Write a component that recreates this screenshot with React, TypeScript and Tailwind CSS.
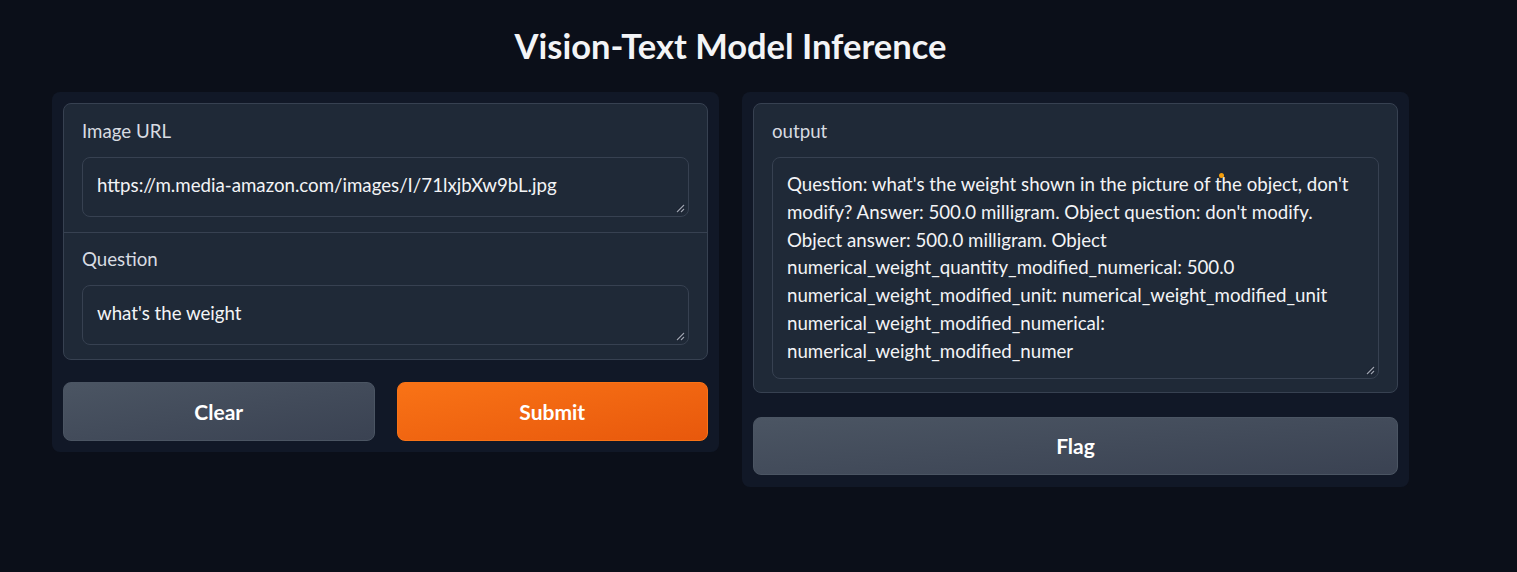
import React from "react";

const FONT = "font-['Lato','Noto_Sans',sans-serif]";

const ResizeHandle = () => (
  <svg className="absolute bottom-[3px] right-[3px]" width="9" height="9" viewBox="0 0 9 9">
    <line x1="1" y1="8" x2="8" y2="1" stroke="#111827" strokeWidth="2.5" />
    <line x1="1" y1="8" x2="8" y2="1" stroke="#9ca3af" strokeWidth="1.2" />
    <line x1="5" y1="8" x2="8" y2="5" stroke="#111827" strokeWidth="2.5" />
    <line x1="5" y1="8" x2="8" y2="5" stroke="#9ca3af" strokeWidth="1.2" />
  </svg>
);

interface FieldProps {
  label: string;
  lines: string[];
  box: string;
  pad: string;
  dot?: boolean;
}

const Field = ({ label, lines, box, pad, dot }: FieldProps) => (
  <div className={`px-[18px] ${pad}`}>
    <div className="text-[18.7px] leading-[22px] text-[#d8dce2]">{label}</div>
    <div
      className={`relative mt-[15px] ${box} rounded-lg border border-[#374151] bg-[#1f2937] px-[14px] text-[18.7px] leading-[27.8px] text-[#f3f4f6]`}
    >
      {lines.map((l, i) => (
        <div key={i} className="whitespace-nowrap">
          {l}
        </div>
      ))}
      {dot && <span className="absolute left-[446px] top-[15px] h-[5px] w-[5px] rounded-full bg-[#f59e0b]" />}
      <ResizeHandle />
    </div>
  </div>
);

const SecondaryButton = ({ children, className = "" }: { children: React.ReactNode; className?: string }) => (
  <button
    className={`rounded-lg border border-[#4b5563] bg-gradient-to-br from-[#4b5563] to-[#3a4252] text-[21px] font-bold text-white ${className}`}
  >
    {children}
  </button>
);

const output = [
  "Question: what's the weight shown in the picture of the object, don't",
  "modify? Answer: 500.0 milligram. Object question: don't modify.",
  "Object answer: 500.0 milligram. Object",
  "numerical_weight_quantity_modified_numerical: 500.0",
  "numerical_weight_modified_unit: numerical_weight_modified_unit",
  "numerical_weight_modified_numerical:",
  "numerical_weight_modified_numer",
];

export default function App() {
  return (
    <div className={`min-h-[572px] w-full bg-[#0b0f19] ${FONT}`}>
      <div className="ml-[52px] w-[1357px] pt-[24px]">
        <h1 className="text-center text-[34.5px] font-bold leading-[44px] text-[#f3f4f6]">
          Vision-Text Model Inference
        </h1>
        <div className="mt-[24px] flex items-start gap-[23px]">
          {/* left column */}
          <div className="w-[667px] rounded-lg bg-[#111827] p-[11px]">
            <div className="rounded-lg border border-[#374151] bg-[#1f2937]">
              <Field
                label="Image URL"
                lines={["https://m.media-amazon.com/images/I/71lxjbXw9bL.jpg"]}
                box="h-[60px] pt-[14px]"
                pad="pt-[16px] pb-[15px]"
              />
              <div className="border-t border-[#374151]" />
              <Field label="Question" lines={["what's the weight"]} box="h-[60px] pt-[14px]" pad="pt-[15px] pb-[14px]" />
            </div>
            <div className="mt-[22px] flex gap-[22px]">
              <SecondaryButton className="h-[59px] flex-1">Clear</SecondaryButton>
              <button className="h-[59px] flex-1 rounded-lg border border-[#f97316] bg-gradient-to-br from-[#f97316] to-[#e8580c] text-[21px] font-bold text-white">
                Submit
              </button>
            </div>
          </div>
          {/* right column */}
          <div className="w-[667px] rounded-lg bg-[#111827] p-[11px] pb-[12px]">
            <div className="rounded-lg border border-[#374151] bg-[#1f2937]">
              <Field label="output" lines={output} box="h-[222px] pt-[13px]" pad="pt-[16px] pb-[13px]" dot />
            </div>
            <SecondaryButton className="mt-[24px] h-[58px] w-full">Flag</SecondaryButton>
          </div>
        </div>
      </div>
    </div>
  );
}
